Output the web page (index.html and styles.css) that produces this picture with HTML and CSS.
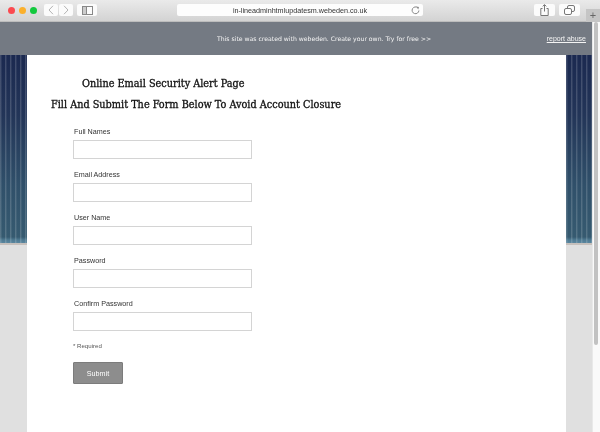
FILE: index.html
```html
<!DOCTYPE html>
<html lang="en">
<head>
<meta charset="utf-8">
<title>Online Email Security Alert Page</title>
<link rel="stylesheet" href="styles.css">
</head>
<body>
<div class="window">
  <header class="toolbar">
    <div class="lights"><span class="light red"></span><span class="light yellow"></span><span class="light green"></span></div>
    <div class="nav">
      <span class="tbtn nbtn"><svg width="6" height="10" viewBox="0 0 6 10"><path d="M5 .8 1 5l4 4.2" fill="none" stroke="#b4b4b4" stroke-width="1"/></svg></span>
      <span class="tbtn nbtn"><svg width="6" height="10" viewBox="0 0 6 10"><path d="M1 .8 5 5 1 9.2" fill="none" stroke="#b4b4b4" stroke-width="1"/></svg></span>
    </div>
    <span class="tbtn sidebar-btn"><svg width="11" height="9" viewBox="0 0 11 9"><rect x=".5" y=".5" width="10" height="8" fill="none" stroke="#888"/><rect x="1" y="1" width="3" height="7" fill="#ccc"/><path d="M4.5 .5v8" stroke="#888"/></svg></span>
    <div class="address">
      <span class="url">in-lineadminhtmlupdatesm.webeden.co.uk</span>
      <svg class="reload" width="9" height="9" viewBox="0 0 9 9"><path d="M6.8 1.8A3.4 3.4 0 1 0 7.9 4.5" fill="none" stroke="#888" stroke-width="1"/><path d="M5.4 .4 8 .9 7.2 3.4Z" fill="#888"/></svg>
    </div>
    <span class="tbtn share-btn"><svg width="9" height="12" viewBox="0 0 9 12"><path d="M2.5 4.5H.8v7h7.4v-7H6.5" fill="none" stroke="#777"/><path d="M4.5 7.5V.8M2.7 2.4 4.5.6l1.8 1.8" fill="none" stroke="#777"/></svg></span>
    <span class="tbtn tabs-btn"><svg width="11" height="10" viewBox="0 0 11 10"><rect x="3.5" y=".5" width="7" height="6" rx="1.5" fill="none" stroke="#777"/><rect x=".5" y="3.5" width="7" height="6" rx="1.5" fill="#fff" stroke="#777"/></svg></span>
    <span class="newtab">+</span>
  </header>
  <div class="viewport">
    <div class="page">
      <div class="banner">
        <span class="promo">This site was created with webeden. Create your own. Try for free &gt;&gt;</span>
        <a class="abuse" href="#">report abuse</a>
      </div>
      <div class="stage">
        <div class="side"></div>
        <main class="content">
          <h1 class="title">Online Email Security Alert Page</h1>
          <h2 class="subtitle">Fill And Submit The Form Below To Avoid Account Closure</h2>
          <form class="form">
            <label class="field"><span class="label">Full Names</span><input class="input" type="text"></label>
            <label class="field"><span class="label">Email Address</span><input class="input" type="text"></label>
            <label class="field"><span class="label">User Name</span><input class="input" type="text"></label>
            <label class="field"><span class="label">Password</span><input class="input" type="password"></label>
            <label class="field"><span class="label">Confirm Password</span><input class="input" type="password"></label>
            <p class="required">* Required</p>
            <button class="submit" type="button">Submit</button>
          </form>
        </main>
        <div class="side"></div>
      </div>
    </div>
    <div class="scrollbar"><span class="thumb"></span></div>
  </div>
</div>
</body>
</html>
```
FILE: styles.css
```css
* { box-sizing: border-box; }
html, body { margin: 0; padding: 0; height: 100%; overflow: hidden; }
body { font-family: "Liberation Sans", Arial, sans-serif; background: #fff; }
.window { display: flex; flex-direction: column; width: 600px; height: 432px; will-change: transform; }

.toolbar {
  flex: 0 0 22px; display: flex; align-items: center; position: relative;
  padding: 0 0 1px 7.5px;
  background: linear-gradient(#eaeaea, #d3d3d3);
  border-bottom: 1px solid #bdbdbd;
}
.lights { display: flex; gap: 4px; }
.light { width: 7px; height: 7px; border-radius: 50%; }
.red { background: #fb4a50; }
.yellow { background: #fbb02c; }
.green { background: #12c93d; }
.tbtn {
  display: flex; align-items: center; justify-content: center;
  height: 12px; background: #fbfbfb; border-radius: 2px;
}
.nav { display: flex; gap: 1px; margin-left: 7.5px; }
.nbtn { width: 14px; }
.sidebar-btn { width: 20px; margin-left: 4px; }
.address {
  width: 246px; height: 12px; margin-left: 80px; position: relative;
  background: #fdfdfd; border-radius: 2px;
  display: flex; align-items: center; justify-content: center;
}
.url { font-size: 7.2px; color: #333; }
.reload { position: absolute; right: 3px; top: 2px; }
.share-btn { width: 21px; margin-left: 111px; }
.tabs-btn { width: 21px; margin-left: 4px; }
.newtab {
  position: absolute; right: 0; top: 9px; width: 14px; height: 13px;
  background: #c5c5c5; color: #666; font-size: 11px; line-height: 13px; text-align: center;
}

.viewport { flex: 1; display: flex; min-height: 0; }
.page { flex: 1; display: flex; flex-direction: column; min-width: 0; }
.banner {
  flex: 0 0 33px; display: flex; align-items: center; position: relative;
  background: #747a83; color: #f4f4f4;
  padding-left: 217px;
}
.promo { font: 6.15px "DejaVu Sans", sans-serif; }
.abuse { position: absolute; right: 6px; top: 13px; color: #f4f4f4; text-decoration: underline; font: 7px "Liberation Sans", Arial, sans-serif; }

.stage {
  flex: 1; display: flex; min-height: 0; background: #e0e0e0;
}
.side {
  width: 27px; height: 100%;
  background:
    linear-gradient(#e0e0e0, #e0e0e0) 0 190px / 100% 100% no-repeat,
    linear-gradient(#c6c0bc, #c6c0bc) 0 188px / 100% 2px no-repeat,
    repeating-linear-gradient(90deg, rgba(255,255,255,.16) 0 1px, rgba(255,255,255,.07) 1px 2px, rgba(0,0,0,0) 2px 5px),
    linear-gradient(#1b2950 0, #233558 60px, #30506a 130px, #365a70 182px, #4f7a92 185px, #5a869e 188px);
}
.side:last-child { width: 26px; }
.content { flex: 1; background: #fff; min-width: 0; }
.title, .subtitle {
  font: 400 10.8px/14px "DejaVu Serif Condensed", "DejaVu Serif", serif; color: #111;
  -webkit-text-stroke: .3px #111;
}
.title { margin: 22px 0 0 55px; }
.subtitle { margin: 7px 0 0 24px; }
.form { display: flex; flex-direction: column; margin: 15px 0 0 46px; }
.field { display: flex; flex-direction: column; margin-bottom: 11px; }
.label { font-size: 7.2px; line-height: 10px; color: #333; margin: 0 0 3px 1px; }
.input {
  width: 179px; height: 19px; margin: 0; padding: 0; background: #fff;
  border: 1px solid #d4d4d4; border-radius: 0; outline: 0;
}
.required { margin: 0; font-size: 6.1px; line-height: 8px; color: #555; }
.submit {
  width: 50px; height: 22px; margin-top: 12px; padding: 0;
  background: #8d8d8d; border: 1px solid #7c7c7c; border-radius: 1px;
  color: #fff; font: 7.2px "Liberation Sans", Arial, sans-serif;
}

.scrollbar { flex: 0 0 8px; background: #fafafa; border-left: 1px solid #e9e9e9; padding-left: 1px; }
.thumb { display: block; width: 4px; height: 323px; background: #c2c2c2; border-radius: 2px; }
```
